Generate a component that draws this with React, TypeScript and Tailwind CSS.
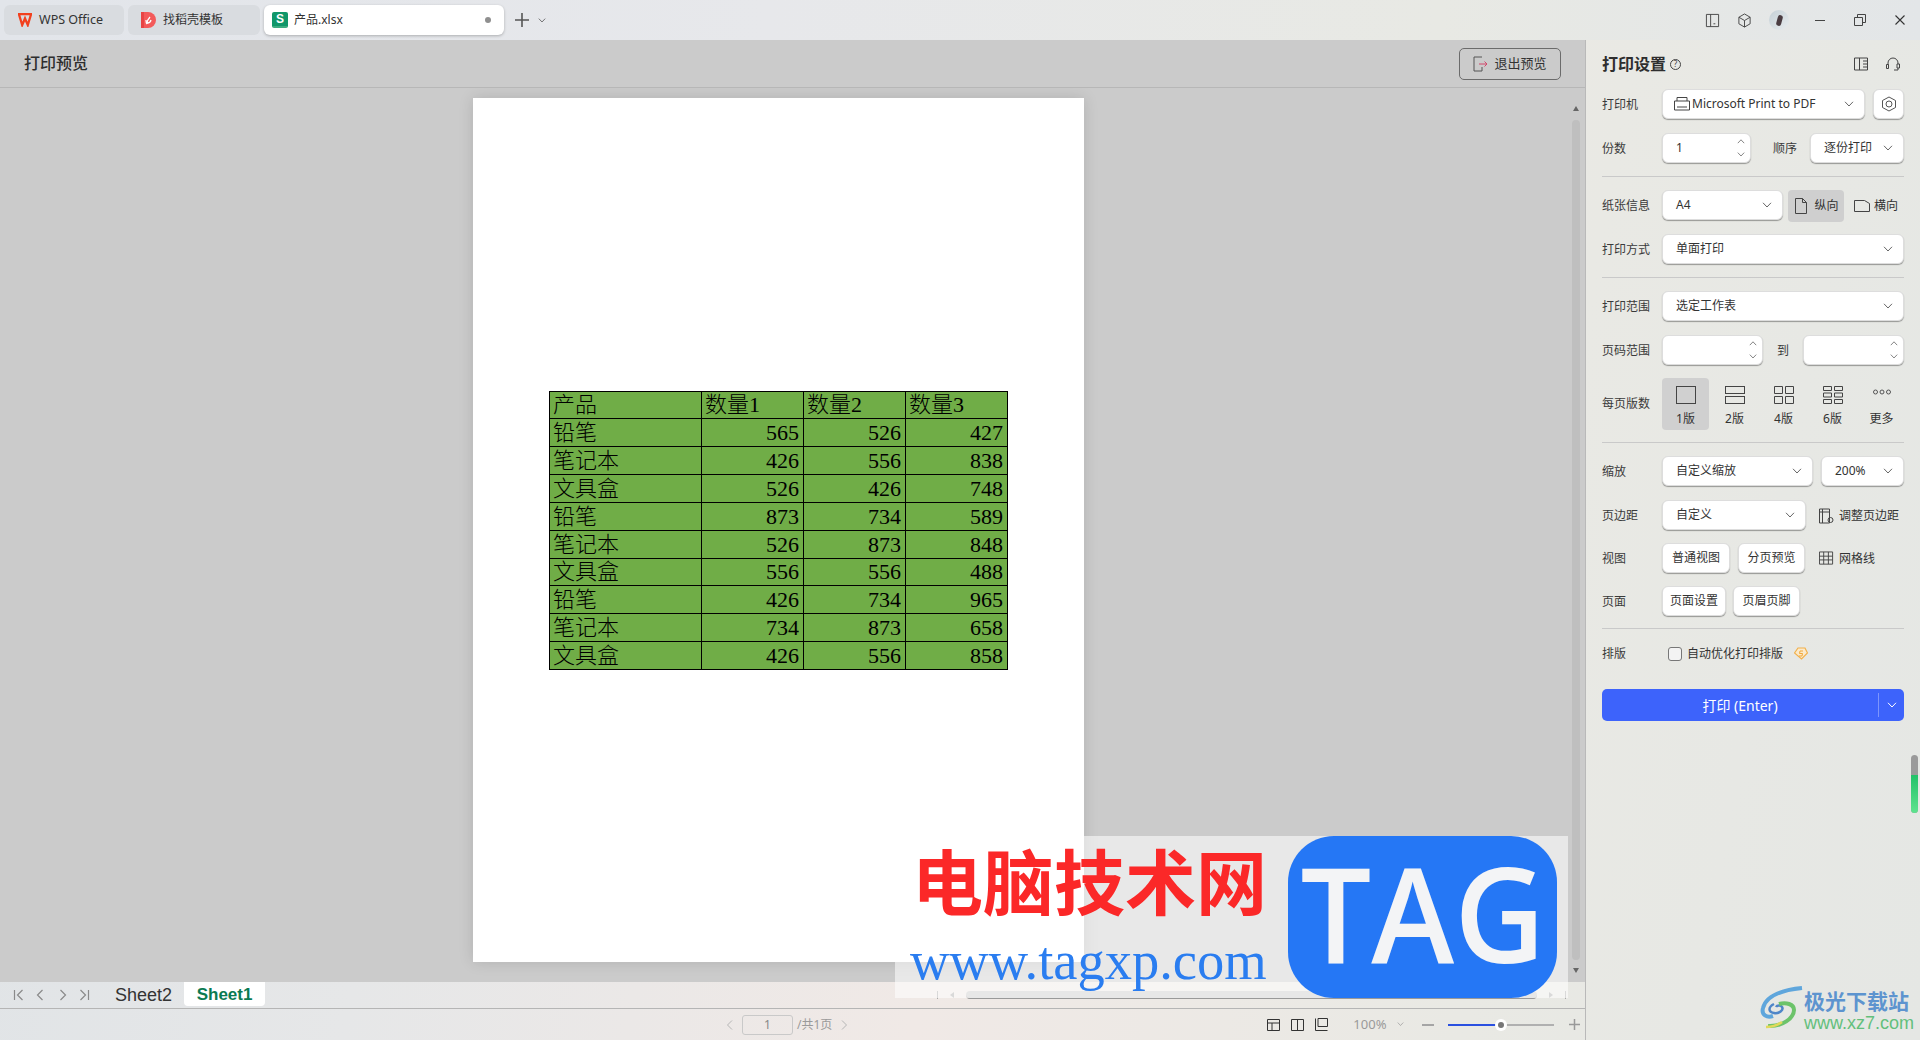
import React from "react";

const Chevron = ({ up = false, c = "#666", w = 10 }: { up?: boolean; c?: string; w?: number }) => (
  <svg width={w} height={w * 0.6} viewBox="0 0 10 6" fill="none" className="shrink-0">
    <path d={up ? "M1 5.2 5 1l4 4.2" : "M1 .8 5 5l4-4.2"} stroke={c} strokeWidth="1" />
  </svg>
);

const Label = ({ children, w = "w-[60px]" }: { children: React.ReactNode; w?: string }) => (
  <span className={`${w} shrink-0 text-[12px] leading-none text-[#3a3a3a]`}>{children}</span>
);

const box = "bg-white rounded-[6px] border border-[#dddddd] shadow-[0_1px_1px_rgba(0,0,0,0.35)] h-[30px] self-start flex items-center";

const Select = ({ text, w, px = "pl-[13px]" }: { text: string; w: string; px?: string }) => (
  <div className={`${box} ${w} ${px} pr-[10px] justify-between text-[12px] leading-none text-[#333]`}>
    <span>{text}</span>
    <Chevron />
  </div>
);

const Spin = ({ text = "", w }: { text?: string; w: string }) => (
  <div className={`${box} ${w} pl-[13px] pr-[5px] justify-between text-[12px] leading-none text-[#333]`}>
    <span>{text}</span>
    <div className="flex flex-col gap-[8px]">
      <Chevron up w={8} />
      <Chevron w={8} />
    </div>
  </div>
);

const Btn = ({ text, w }: { text: string; w: string }) => (
  <div className={`${box} ${w} justify-center text-[12px] leading-none text-[#333]`}>{text}</div>
);

const Divider = ({ mt }: { mt: string }) => <div className={`${mt} h-px w-[302px] bg-[#c9c9c9]`} />;

const LayoutOpt = ({ icon, text, active = false }: { icon: React.ReactNode; text: string; active?: boolean }) => (
  <div className={`w-[47px] h-[52px] flex flex-col items-center rounded-[4px] pt-[7px] ${active ? "bg-[#d0d0d0]" : ""}`}>
    <div className="h-[19px] flex items-center justify-center">{icon}</div>
    <span className="mt-[7px] text-[12px] leading-[16px] text-[#333]">{text}</span>
  </div>
);

const rows: [string, number, number, number][] = [
  ["铅笔", 565, 526, 427],
  ["笔记本", 426, 556, 838],
  ["文具盒", 526, 426, 748],
  ["铅笔", 873, 734, 589],
  ["笔记本", 526, 873, 848],
  ["文具盒", 556, 556, 488],
  ["铅笔", 426, 734, 965],
  ["笔记本", 734, 873, 658],
  ["文具盒", 426, 556, 858],
];

const cell = "border border-black p-0 pl-[3px] text-left leading-none font-light align-middle";
const num = "border border-black p-0 pr-[4px] text-right leading-none font-light align-middle";

const PageTable = () => (
  <table className="ml-[76px] mt-[293px] w-[458px] table-fixed border-collapse bg-[#70ad47] text-[22px] text-black font-['Liberation_Serif','Noto_Sans_CJK_SC',serif]">
    <colgroup>
      <col className="w-[152px]" />
      <col className="w-[102px]" />
      <col className="w-[102px]" />
      <col className="w-[102px]" />
    </colgroup>
    <tbody>
      <tr className="h-[27px]">
        <td className={cell}>产品</td>
        <td className={cell}>数量1</td>
        <td className={cell}>数量2</td>
        <td className={cell}>数量3</td>
      </tr>
      {rows.map((r, i) => (
        <tr key={i} className={i === 5 ? "h-[27px]" : "h-[28px]"}>
          <td className={cell}>{r[0]}</td>
          <td className={num}>{r[1]}</td>
          <td className={num}>{r[2]}</td>
          <td className={num}>{r[3]}</td>
        </tr>
      ))}
    </tbody>
  </table>
);

const Stroke = ({ size = 16, d, c = "#444", w = 1, vb = 16 }: { size?: number; d: string; c?: string; w?: number; vb?: number }) => (
  <svg width={size} height={size} viewBox={`0 0 ${vb} ${vb}`} fill="none" className="shrink-0">
    <path d={d} stroke={c} strokeWidth={w} />
  </svg>
);

export default function App() {
  return (
    <div className="relative w-[1920px] h-[1040px] overflow-hidden flex flex-col bg-[linear-gradient(100deg,#dfe3e6_0%,#e6e7e8_25%,#f0e9e6_52%,#e9e9e4_78%,#e5e7e4_100%)] font-['Noto_Sans','Noto_Sans_CJK_SC',sans-serif]">
      {/* Title bar */}
      <div className="h-[40px] shrink-0 flex items-center bg-[linear-gradient(90deg,#e2e5ea_0%,#e7e8eb_40%,#e8e9e4_75%,#e3e6e8_100%)]">
        <div className="ml-[4px] w-[120px] h-[30px] rounded-[6px] bg-[#d9dce0] flex items-center pl-[13px] gap-[6px]">
          <svg width="16" height="14" viewBox="0 0 16 14" fill="none" className="shrink-0">
            <path d="M1 1h14M2 1.500 5.200 12 8 5.500 10.800 12 14 1.500" stroke="#f2401e" strokeWidth="2.300" />
          </svg>
          <span className="text-[12.500px] leading-none text-[#333]">WPS Office</span>
        </div>
        <div className="ml-[4px] w-[132px] h-[30px] rounded-[6px] bg-[#d9dce0] flex items-center pl-[13px] gap-[7px]">
          <svg width="15" height="16" viewBox="0 0 15 16" className="shrink-0">
            <path d="M0 0h7a8 8 0 0 1 0 16H0z" fill="#f35a5a" />
            <rect x="0" y="0" width="3" height="16" fill="#e84444" />
            <path d="M6 12c0-3 1-5 3-7M6 12c-1-1-1-3-1-4M6.500 11c1.500 0 3-1 3.500-3" stroke="#fff" strokeWidth="1.300" fill="none" />
          </svg>
          <span className="text-[12px] leading-none text-[#333]">找稻壳模板</span>
        </div>
        <div className="ml-[4px] w-[240px] h-[30px] rounded-[6px] bg-white shadow-[0_1px_3px_rgba(0,0,0,0.25)] flex items-center pl-[8px] pr-[13px]">
          <div className="w-[16px] h-[16px] rounded-[2px] bg-[#10976a] border-b-[2px] border-[#3cab80] flex items-center justify-center text-white text-[12px] font-bold leading-none font-['Liberation_Sans',sans-serif]">
            S
          </div>
          <span className="ml-[6px] text-[12px] leading-none text-[#333]">产品.xlsx</span>
          <span className="ml-auto w-[6px] h-[6px] rounded-full bg-[#8f8f8f]" />
        </div>
        <div className="ml-[10px]">
          <Stroke size={16} d="M1 8h14M8 1v14" c="#555" w={1.600} />
        </div>
        <div className="ml-[8px]">
          <Chevron w={8} c="#555" />
        </div>
        <div className="ml-auto flex items-center">
          <Stroke size={15} d="M1.500 1.500h13v13h-13zM6 1.500v13M9 11.500h2" c="#444" />
          <div className="ml-[17px]">
            <Stroke size={15} d="M8 1l6 3.500v7L8 15l-6-3.500v-7zM2 4.500 8 8l6-3.500M8 8v7" c="#444" />
          </div>
          <div className="ml-[17px] w-[20px] h-[20px] rounded-full bg-[linear-gradient(135deg,#c4d0d6,#e8ecee)] flex items-center justify-center">
            <div className="w-[5px] h-[11px] rounded-full bg-[#4a3d42] rotate-[15deg]" />
          </div>
          <div className="ml-[26px] w-[10px] h-px bg-[#444]" />
          <div className="ml-[29px]">
            <Stroke size={12} vb={12} d="M.500 3.500h8v8h-8zM3.500 3.500V.500h8v8H8.500" c="#444" />
          </div>
          <div className="ml-[29px] mr-[15px]">
            <Stroke size={10} vb={10} d="M.500.500l9 9M9.500.500l-9 9" c="#333" w={1.100} />
          </div>
        </div>
      </div>

      {/* Body */}
      <div className="flex flex-1 min-h-0">
        <div className="w-[1586px] shrink-0 flex flex-col border-r border-[#b9b9b9]">
          <div className="h-[942px] shrink-0 bg-[#cbcbcb] flex flex-col">
            <div className="h-[48px] shrink-0 flex items-center justify-between border-b border-[#b7b7b7] pl-[24px] pr-[24px]">
              <span className="text-[16px] leading-none font-medium text-[#2e2e2e] pb-[1px]">打印预览</span>
              <div className="w-[102px] h-[32px] rounded-[5px] border border-[#6b6b6b] flex items-center justify-center gap-[6px] text-[13px] leading-none text-[#333]">
                <svg width="15" height="16" viewBox="0 0 15 16" fill="none" className="shrink-0">
                  <path d="M9 1H1v14h8V11" stroke="#555" />
                  <path d="M6 8h8M11.500 5.500 14 8l-2.500 2.500" stroke="#d2476b" />
                </svg>
                退出预览
              </div>
            </div>
            <div className="flex-1 flex min-h-0 overflow-hidden">
              <div className="flex-1 pl-[473px] pt-[10px]">
                <div className="w-[611px] h-[864px] bg-white shadow-[0_0_14px_rgba(0,0,0,0.13)] flex flex-col">
                  <PageTable />
                </div>
              </div>
              <div className="w-[18px] shrink-0 flex flex-col items-center pt-[18px]">
                <div className="w-0 h-0 border-x-[3px] border-x-transparent border-b-[5px] border-b-[#666]" />
                <div className="mt-[9px] w-[8px] h-[840px] rounded-[4px] bg-[#bfbfbf]" />
                <div className="mt-[8px] w-0 h-0 border-x-[3px] border-x-transparent border-t-[5px] border-t-[#666]" />
              </div>
            </div>
          </div>

          {/* Sheet bar */}
          <div className="h-[27px] shrink-0 flex items-start border-b border-[#b5b5b5]">
            <div className="flex items-center h-[26px] pl-[13px] gap-[9px]">
              <Stroke size={12} vb={12} d="M1.500 1v10M9.500 1 4.500 6l5 5" c="#8a8a8a" w={1.200} />
              <Stroke size={12} vb={12} d="M8.500 1 3.500 6l5 5" c="#8a8a8a" w={1.200} />
              <div className="ml-[2px]"><Stroke size={12} vb={12} d="m3.500 1 5 5-5 5" c="#8a8a8a" w={1.200} /></div>
              <Stroke size={12} vb={12} d="M10.500 1v10M2.500 1l5 5-5 5" c="#8a8a8a" w={1.200} />
            </div>
            <div className="ml-[25px] h-[26px] flex items-center text-[18px] leading-none text-[#333] font-['Liberation_Sans',sans-serif]">Sheet2</div>
            <div className="ml-[12px] w-[81px] h-[24px] bg-white rounded-b-[4px] flex items-center justify-center text-[17px] leading-none font-bold text-[#0a7a52] font-['Liberation_Sans',sans-serif]">Sheet1</div>
            <div className="ml-[672px] h-[17px] flex items-end gap-[12px]">
              <div className="w-px h-[8px] bg-[#aaa]" />
              <div className="w-0 h-0 mb-[1px] border-y-[3px] border-y-transparent border-r-[4px] border-r-[#aaa]" />
              <div className="w-[571px] h-[8px] rounded-[4px] bg-[#c9c9c9] border-b border-[#999]" />
              <div className="w-0 h-0 mb-[1px] border-y-[3px] border-y-transparent border-l-[4px] border-l-[#aaa]" />
              <div className="w-px h-[8px] bg-[#aaa]" />
            </div>
          </div>

          {/* Status bar */}
          <div className="flex-1 flex items-center text-[12px] leading-none text-[#9a9a9a]">
            <div className="ml-[725px]"><Stroke size={10} vb={10} d="M7 .500 2.500 5 7 9.500" c="#b5b5b5" /></div>
            <div className="ml-[7px] w-[51px] h-[20px] rounded-[3px] border border-[#c9c9c9] flex items-center justify-center text-[#888]">1</div>
            <span className="ml-[4px] whitespace-nowrap">/共1页</span>
            <div className="ml-[7px]"><Stroke size={10} vb={10} d="M3 .500 7.500 5 3 9.500" c="#b5b5b5" /></div>
            <div className="ml-[418px] flex items-center gap-[11px]">
              <Stroke size={13} vb={13} d="M.500 1.500h12v11H.500zM.500 5h12M5 5v7.500" c="#333" />
              <Stroke size={13} vb={13} d="M.500 1.500h12v11H.500zM6.500 1.500v11" c="#333" />
              <Stroke size={13} vb={13} d="M.500 .500v12h12M3 .500h9.500v8H3z" c="#333" />
            </div>
            <span className="ml-[25px] text-[13px]">100%</span>
            <div className="ml-[11px]"><Chevron w={7} c="#999" /></div>
            <div className="ml-[18px] w-[12px] h-[2px] bg-[#a5a5a5]" />
            <div className="ml-[14px] w-[106px] h-[2px] bg-[#b0b0b0] relative">
              <div className="w-[53px] h-[2px] bg-[#2a50e0]" />
              <div className="absolute left-[47px] top-[-5px] w-[12px] h-[12px] rounded-full bg-white flex items-center justify-center">
                <div className="w-[6px] h-[6px] rounded-full bg-[#777]" />
              </div>
            </div>
            <div className="ml-[15px]"><Stroke size={11} vb={11} d="M0 5.500h11M5.500 0v11" c="#999" w={1.500} /></div>
          </div>
        </div>

        {/* Right panel */}
        <div className="flex-1 flex flex-col pl-[16px] pr-[16px] relative">
          <div className="h-[48px] shrink-0 flex items-center">
            <span className="text-[16px] leading-none font-bold text-[#2e2e2e] pb-[1px]">打印设置</span>
            <div className="ml-[4px] w-[11px] h-[11px] rounded-full border border-[#444] flex items-center justify-center text-[8px] leading-none text-[#444]">?</div>
            <div className="ml-auto flex items-center gap-[18px] pr-[5px]">
              <Stroke size={14} vb={14} d="M.500 1h13v12H.500zM5.500 1v12M9 4h4M9 7h4M9 10h4" c="#444" />
              <Stroke size={14} vb={14} d="M2 8V6a5 5 0 0 1 10 0v1M.500 7.500h2v4h-2zM11 7h2.500v4H11zM12 11v2H8" c="#444" />
            </div>
          </div>

          <div className="mt-[1px] h-[31px] flex items-center shrink-0">
            <Label>打印机</Label>
            <div className={`${box} w-[203px] pl-[11px] pr-[10px] text-[12px] leading-none text-[#333]`}>
              <Stroke size={16} d="M.500 5h15v9h-15zM3 5V1.500h10V5M3 11h10" c="#444" />
              <span className="ml-[2px]">Microsoft Print to PDF</span>
              <div className="ml-auto"><Chevron /></div>
            </div>
            <div className={`${box} ml-[8px] w-[31px] justify-center`}>
              <Stroke size={16} d="M8 1 14.500 4.500v7L8 15l-6.500-3.500v-7zM11 8a3 3 0 1 1-6 0 3 3 0 0 1 6 0z" c="#555" />
            </div>
          </div>

          <div className="mt-[13px] h-[31px] flex items-center shrink-0">
            <Label>份数</Label>
            <Spin text="1" w="w-[89px]" />
            <span className="ml-[22px] w-[37px] text-[12px] leading-none text-[#3a3a3a]">顺序</span>
            <Select text="逐份打印" w="w-[94px]" />
          </div>

          <Divider mt="mt-[12px]" />

          <div className="mt-[13px] h-[31px] flex items-center shrink-0">
            <Label>纸张信息</Label>
            <Select text="A4" w="w-[121px]" />
            <div className="ml-[5px] w-[56px] h-[32px] rounded-[4px] bg-[#cfcfcf] flex items-center justify-center gap-[5px] text-[12px] leading-none text-[#333]">
              <Stroke size={16} d="M2.500 .500h7L13.500 4.500v11h-11zM9.500 .500v4h4" c="#444" />
              纵向
            </div>
            <div className="ml-[10px] flex items-center gap-[4px] text-[12px] leading-none text-[#333]">
              <Stroke size={16} d="M.500 2.500h10l5 3v8h-15z" c="#444" />
              横向
            </div>
          </div>

          <div className="mt-[13px] h-[31px] flex items-center shrink-0">
            <Label>打印方式</Label>
            <Select text="单面打印" w="w-[242px]" />
          </div>

          <Divider mt="mt-[12px]" />

          <div className="mt-[13px] h-[31px] flex items-center shrink-0">
            <Label>打印范围</Label>
            <Select text="选定工作表" w="w-[242px]" />
          </div>

          <div className="mt-[13px] h-[31px] flex items-center shrink-0">
            <Label>页码范围</Label>
            <Spin w="w-[101px]" />
            <span className="ml-[14px] w-[26px] text-[12px] leading-none text-[#3a3a3a]">到</span>
            <Spin w="w-[101px]" />
          </div>

          <div className="mt-[12px] h-[52px] flex items-center shrink-0">
            <span className="w-[60px] shrink-0 text-[12px] leading-none text-[#3a3a3a]">每页版数</span>
            <div className="flex gap-[2px]">
              <LayoutOpt active text="1版" icon={<svg width="20" height="18" fill="none" viewBox="0 0 20 18"><rect x=".5" y=".5" width="19" height="17" stroke="#444" /></svg>} />
              <LayoutOpt text="2版" icon={<svg width="20" height="18" fill="none" viewBox="0 0 20 18"><rect x=".5" y=".5" width="19" height="7" stroke="#444" /><rect x=".5" y="10.500" width="19" height="7" stroke="#444" /></svg>} />
              <LayoutOpt text="4版" icon={<svg width="20" height="18" fill="none" viewBox="0 0 20 18"><path d="M.5.500h8v7h-8zM11.500.500h8v7h-8zM.5 10.500h8v7h-8zM11.500 10.500h8v7h-8z" stroke="#444" /></svg>} />
              <LayoutOpt text="6版" icon={<svg width="20" height="18" fill="none" viewBox="0 0 20 18"><path d="M.5.500h8v4h-8zM11.500.500h8v4h-8zM.5 7h8v4h-8zM11.500 7h8v4h-8zM.5 13.500h8v4h-8zM11.500 13.500h8v4h-8z" stroke="#444" /></svg>} />
              <LayoutOpt text="更多" icon={<svg width="18" height="6" fill="none" viewBox="0 0 18 6" className="mb-[6px]"><circle cx="2.500" cy="3" r="2" stroke="#555" /><circle cx="9" cy="3" r="2" stroke="#555" /><circle cx="15.500" cy="3" r="2" stroke="#555" /></svg>} />
            </div>
          </div>

          <Divider mt="mt-[12px]" />

          <div className="mt-[13px] h-[31px] flex items-center shrink-0">
            <Label>缩放</Label>
            <Select text="自定义缩放" w="w-[151px]" />
            <div className="ml-[8px] self-start"><Select text="200%" w="w-[83px]" px="pl-[13px]" /></div>
          </div>

          <div className="mt-[13px] h-[31px] flex items-center shrink-0">
            <Label>页边距</Label>
            <Select text="自定义" w="w-[144px]" />
            <div className="ml-[13px] flex items-center gap-[4px] text-[12px] leading-none text-[#333]">
              <Stroke size={16} d="M.500 1h10v14h-10zM.500 4h10M3.500 1v14M14 12a2.500 2.500 0 1 1-5 0 2.500 2.500 0 0 1 5 0z" c="#444" />
              调整页边距
            </div>
          </div>

          <div className="mt-[12px] h-[31px] flex items-center shrink-0">
            <Label>视图</Label>
            <Btn text="普通视图" w="w-[68px]" />
            <div className="ml-[8px] self-start"><Btn text="分页预览" w="w-[67px]" /></div>
            <div className="ml-[14px] flex items-center gap-[5px] text-[12px] leading-none text-[#333]">
              <Stroke size={15} d="M.500 1h14v13H.500zM5 1v13M10 1v13M.500 5.500h14M.500 9.500h14" c="#444" />
              网格线
            </div>
          </div>

          <div className="mt-[12px] h-[31px] flex items-center shrink-0">
            <Label>页面</Label>
            <Btn text="页面设置" w="w-[64px]" />
            <div className="ml-[7px] self-start"><Btn text="页眉页脚" w="w-[67px]" /></div>
          </div>

          <Divider mt="mt-[11px]" />

          <div className="mt-[9px] h-[31px] flex items-center shrink-0">
            <Label>排版</Label>
            <div className="ml-[6px] w-[14px] h-[14px] rounded-[3px] border border-[#777] bg-[#f3f3f3]" />
            <span className="ml-[5px] text-[12px] leading-none text-[#333]">自动优化打印排版</span>
            <svg width="14" height="13" viewBox="0 0 14 13" fill="none" className="ml-[11px]">
              <path d="M4 1h7l2.500 5L7.500 12 .5 6z" stroke="#f2b04a" strokeWidth="1.200" fill="#fbeacb" />
              <path d="M9 4H6l-.5 2.500h3l-.5 2.500H5" stroke="#f2a93a" strokeWidth="1" />
            </svg>
          </div>

          <div className="mt-[20px] w-[302px] h-[32px] rounded-[5px] bg-[#3d63fb] flex items-center text-white text-[14px] leading-none shrink-0">
            <div className="flex-1 text-center pt-[1px]">打印 (Enter)</div>
            <div className="w-px h-[24px] bg-[#7d95fc]" />
            <div className="w-[25px] flex justify-center"><Chevron c="#fff" /></div>
          </div>

          {/* Side widget */}
          <div className="absolute right-[3px] top-[715px] w-[7px] h-[58px] rounded-full bg-[#9a9a9a] overflow-hidden flex flex-col justify-end">
            <div className="h-[38px] bg-[linear-gradient(180deg,#22c168,#5fe38f)]" />
          </div>
        </div>
      </div>

      {/* Watermark: tagxp */}
      <div className="absolute left-[895px] top-[836px] w-[673px] h-[162px] bg-white/55 flex">
        <div className="w-[393px] shrink-0 flex flex-col">
          <span className="ml-[17px] mt-[7px] text-[71px] leading-none font-bold whitespace-nowrap text-[#fb2828] font-['Noto_Sans_CJK_SC',sans-serif]">电脑技术网</span>
          <span className="ml-[15px] mt-[17px] text-[54.500px] leading-[60px] whitespace-nowrap text-[#2a7df0] font-['Liberation_Serif',serif]">www.tagxp.com</span>
        </div>
        <div className="w-[269px] h-[162px] rounded-[46px] bg-[#2577f5] flex items-center justify-center pb-[10px]">
          <span className="text-[132px] leading-none font-semibold text-[#f3f4f6] scale-x-[0.95] font-['Open_Sans',sans-serif]">TAG</span>
        </div>
      </div>

      {/* Watermark: xz7 */}
      <div className="absolute left-[1760px] top-[986px] flex items-start">
        <svg width="44" height="44" viewBox="0 0 44 44" fill="none" className="shrink-0">
          <path d="M42 2C22 4 6 10 3 22c-2 7 4 10 10 8" stroke="#5fa6dc" strokeWidth="4" />
          <path d="M14 18c-6 3-6 8 0 9 5 1 10-3 8-6-1-2-5-2-6 0" stroke="#4f86c8" strokeWidth="2.500" />
          <path d="M8 40c14 1 26-8 26-16 0-6-8-8-15-6" stroke="#6cc36a" strokeWidth="4" />
          <path d="M6 41c6 0 12-2 16-5" stroke="#e2d95a" strokeWidth="2.500" />
        </svg>
        <div className="flex flex-col">
          <span className="text-[21px] leading-[24px] mt-[2px] font-bold whitespace-nowrap text-[#5d94cf] font-['Noto_Sans_CJK_SC',sans-serif]">极光下载站</span>
          <span className="text-[18px] leading-[18px] mt-[2px] whitespace-nowrap text-[#63bf7c] font-['Liberation_Sans',sans-serif]">www.xz7.com</span>
        </div>
      </div>
    </div>
  );
}
